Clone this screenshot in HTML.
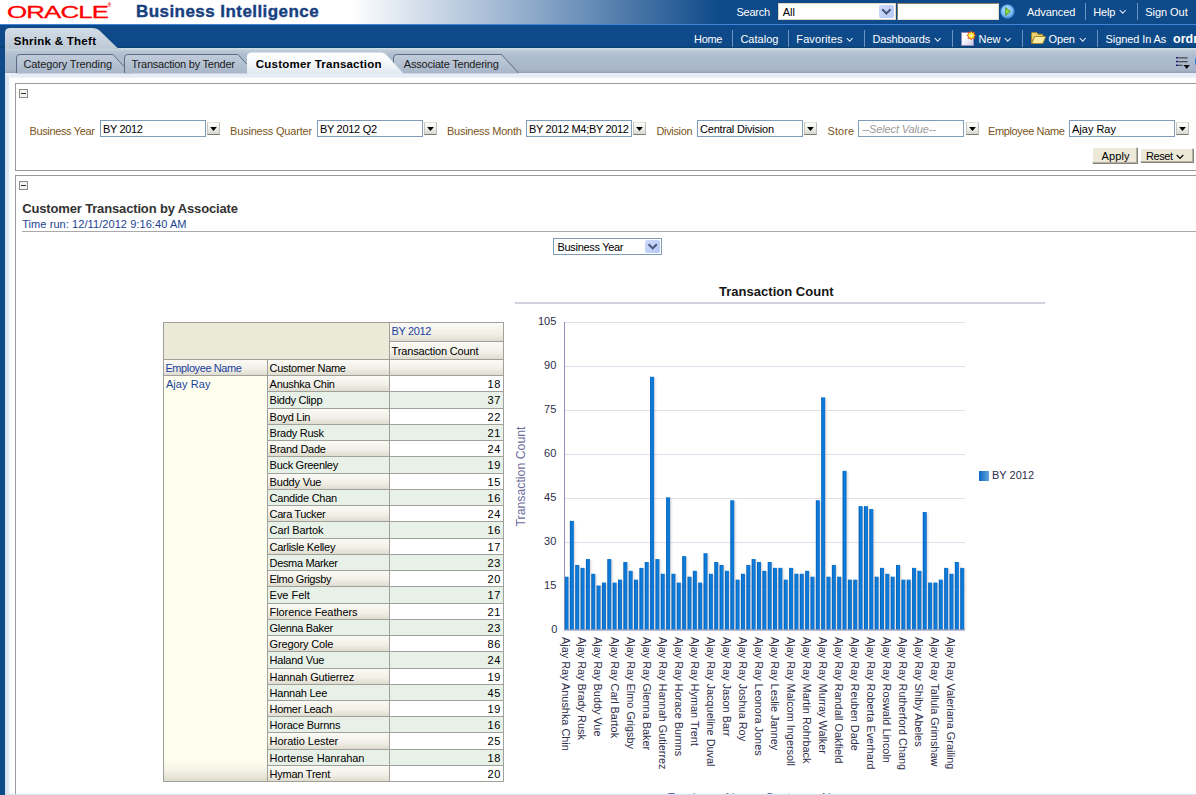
<!DOCTYPE html>
<html lang="en"><head><meta charset="utf-8"><title>Oracle Business Intelligence - Shrink &amp; Theft</title>
<style>
html,body{margin:0;padding:0}
body{width:1196px;height:795px;overflow:hidden;position:relative;background:#fff;font-family:"Liberation Sans",sans-serif;font-size:11px;color:#000}
.a{position:absolute}
.t{position:absolute;white-space:nowrap;line-height:normal}
#hdr{left:0;top:0;width:1196px;height:24px;background:linear-gradient(to right,#fff 0,#fff 350px,#89a6c8 540px,#0e4a89 720px,#0e4a89 100%)}
#hline{left:0;top:24px;width:1196px;height:1px;background:#3f86da}
#nav{left:0;top:25px;width:1196px;height:23px;background:linear-gradient(to bottom,#0e4a89 0,#0e4a89 88%,#0a4070 100%)}
#leftbar{left:0;top:48px;width:5px;height:747px;background:#0e4a89}
#subband{left:5px;top:48px;width:1191px;height:25px;background:linear-gradient(to bottom,#d5dfe8 0,#b9c7d6 12%,#aebdcf 30%,#a7b5c9 88%,#949fb5 100%)}
#content{left:5px;top:73px;width:1191px;height:722px;background:#fff}
.sep{position:absolute;width:1px;background:#6f93bf}
.inp{position:absolute;box-sizing:border-box;border:1px solid #7f9db9;background:#fff;height:17px}
.ddb{position:absolute;box-sizing:border-box;width:13px;height:13px;background:linear-gradient(to bottom,#fdfdfb 0,#f0f0ea 50%,#d8d8d0 100%);border:1px solid;border-color:#e2e2dc #bdbdb5 #7c7c74 #c6c6be}
.ddb:after{content:"";position:absolute;left:1.9px;top:3.8px;width:7.2px;height:4.2px;background:#000;clip-path:polygon(0 0,100% 0,50% 100%)}
.btn{position:absolute;box-sizing:border-box;background:#ece9d8;border:1px solid;border-color:#fff #b5b2a2 #b5b2a2 #fff;box-shadow:1px 1px 0 #86847a}
.sec{position:absolute;box-sizing:border-box;border:1px solid #9a9a9a;border-right:none;background:#fff}
.col{position:absolute;box-sizing:border-box;width:9px;height:9px;border:1px solid #8a8a8a;background:#f4f4ee}
.col:after{content:"";position:absolute;left:1px;top:3px;width:5px;height:1px;background:#333}
.cell{position:absolute;box-sizing:border-box;border-right:1px solid #a3a3a3;border-bottom:1px solid #a3a3a3}
.g{background:linear-gradient(to bottom,#fbfaf6 0,#f1efe6 60%,#dfdccf 100%)}
.gr{background:#e8f1e8}
.w{background:#fff}
.xl{position:absolute;white-space:nowrap;transform-origin:0 0;transform:rotate(90deg);font-size:11px;color:#2e2e4a;line-height:normal}

</style></head>
<body>
<div class="a" id="hdr"></div><div class="a" id="hline"></div><div class="a" id="nav"></div>
<div class="a" id="leftbar"></div><div class="a" id="subband"></div>
<div class="a" id="content"></div>
<div class="a" style="left:5px;top:73px;width:1191px;height:5px;background:linear-gradient(to bottom,#e9eff6 0,#e4ebf4 75%,#f6f9fc 100%)"></div>
<div class="a" style="left:5px;top:75px;width:5px;height:720px;background:linear-gradient(to right,#d6e1ef 0,#dfe8f3 70%,#fff 100%)"></div>
<svg class="a" style="left:0;top:24px" width="1196" height="54" viewBox="0 24 1196 54">
<defs>
<linearGradient id="gt" x1="0" y1="0" x2="0" y2="1"><stop offset="0" stop-color="#d2dde7"/><stop offset="1" stop-color="#bcc9d5"/></linearGradient>
<linearGradient id="gi" x1="0" y1="0" x2="0" y2="1"><stop offset="0" stop-color="#c1cddb"/><stop offset="1" stop-color="#a8b6c9"/></linearGradient>
<linearGradient id="ga" x1="0" y1="0" x2="0" y2="1"><stop offset="0" stop-color="#ffffff"/><stop offset="0.5" stop-color="#f6f8fb"/><stop offset="1" stop-color="#dfe7f0"/></linearGradient>
</defs>
<path d="M5 49 L5 33 Q5 28 10 28 L92 28 Q97 28 100 31 L117 47.5 Q118 48.5 121 48.5 L121 49 Z" fill="url(#gt)"/>
<path d="M16.5 73.5 L16.5 58 Q16.5 54.5 20.0 54.5 L113 54.5 L130 73.5 Z" fill="url(#gi)"/><path d="M16.5 73 L16.5 58 Q16.5 54.5 20.0 54.5 L113 54.5 L130 73" fill="none" stroke="#5d6d80" stroke-width="1"/>
<path d="M124.5 73.5 L124.5 58 Q124.5 54.5 128.0 54.5 L238 54.5 L255 73.5 Z" fill="url(#gi)"/><path d="M124.5 73 L124.5 58 Q124.5 54.5 128.0 54.5 L238 54.5 L255 73" fill="none" stroke="#5d6d80" stroke-width="1"/>
<path d="M393.5 73.5 L393.5 58 Q393.5 54.5 397.0 54.5 L501.5 54.5 L518.5 73.5 Z" fill="url(#gi)"/><path d="M393.5 73 L393.5 58 Q393.5 54.5 397.0 54.5 L501.5 54.5 L518.5 73" fill="none" stroke="#5d6d80" stroke-width="1"/>
<path d="M247 74 L247 57 Q247 52.500 251.500 52.500 L381 52.500 Q384 52.500 386 54.500 L403 73 L403 74 Z" fill="url(#ga)"/>
</svg>
<span class="a" style="left:6.5px;top:2.8px;font-size:16.8px;line-height:normal;color:#f00;transform-origin:0 0;transform:scaleX(1.54);white-space:nowrap;letter-spacing:-0.55px;-webkit-text-stroke:0.3px #f00">ORACLE</span>
<span class="a" style="left:107.8px;top:3.2px;font-size:4.5px;color:#f00;line-height:normal;font-weight:bold">&#174;</span>
<span class="t" id="t0" style="left:136.0px;top:2.3px;font-size:17px;color:#17407f;font-weight:bold;letter-spacing:0.443px;-webkit-text-stroke:0.4px #17407f;">Business Intelligence</span>
<span class="t" id="t1" style="left:736.5px;top:5.9px;font-size:11px;color:#fff;letter-spacing:-0.272px;">Search</span>
<div class="a" style="left:778px;top:3px;width:118px;height:17px;box-sizing:border-box;background:#fff;border:1px solid #ddd6c6"></div>
<div class="a" style="left:879px;top:5px;width:15px;height:13px;border-radius:2px;background:linear-gradient(135deg,#cfdbfb,#b5c7f6);"><svg width="14" height="13" viewBox="0 0 14 13"><path d="M3.200 4.300 L7.400 8.500 L11.600 4.300" fill="none" stroke="#46557a" stroke-width="2"/></svg></div>
<span class="t" id="t2" style="left:782.8px;top:5.9px;font-size:11px;color:#000;letter-spacing:-0.017px;">All</span>
<div class="a" style="left:897px;top:3px;width:102px;height:17px;box-sizing:border-box;background:#fff;border:1px solid;border-color:#8a8168 #e4dfd0 #e4dfd0 #8a8168"></div>
<svg class="a" style="left:1000px;top:4px" width="15" height="15" viewBox="0 0 15 15"><defs><radialGradient id="gb" cx="0.45" cy="0.4" r="0.65"><stop offset="0" stop-color="#c4e4ff"/><stop offset="0.6" stop-color="#7fbef5"/><stop offset="1" stop-color="#3a88d8"/></radialGradient></defs><circle cx="7.500" cy="7.500" r="6.900" fill="url(#gb)" stroke="#2f74c4" stroke-width="0.700"/><path d="M5.700 3.600 L10.300 7.500 L5.700 11.400 Z" fill="#97dc48" stroke="#3f8c1c" stroke-width="0.900" stroke-linejoin="round"/></svg>
<span class="t" id="t3" style="left:1026.9px;top:5.9px;font-size:11px;color:#fff;letter-spacing:-0.048px;">Advanced</span>
<div class="sep" style="left:1085px;top:3px;height:17px"></div>
<span class="t" id="t4" style="left:1093.2px;top:5.9px;font-size:11px;color:#fff;letter-spacing:-0.175px;">Help</span>
<svg class="a" style="left:1119px;top:9px" width="8" height="6"><path d="M0.700 1 L3.700 4.200 L6.700 1" fill="none" stroke="#e8eef7" stroke-width="1.050"/></svg>
<div class="sep" style="left:1137px;top:3px;height:17px"></div>
<span class="t" id="t5" style="left:1145.3px;top:5.9px;font-size:11px;color:#fff;letter-spacing:-0.059px;">Sign Out</span>
<span class="t" id="t6" style="left:694.1px;top:33.3px;font-size:11px;color:#fff;letter-spacing:-0.381px;">Home</span>
<div class="sep" style="left:732px;top:30px;height:17px"></div>
<span class="t" id="t7" style="left:740.4px;top:33.3px;font-size:11px;color:#fff;letter-spacing:0.013px;">Catalog</span>
<div class="sep" style="left:788px;top:30px;height:17px"></div>
<span class="t" id="t8" style="left:796.3px;top:33.3px;font-size:11px;color:#fff;letter-spacing:0.119px;">Favorites</span>
<svg class="a" style="left:846px;top:37px" width="8" height="6"><path d="M0.700 1 L3.700 4.200 L6.700 1" fill="none" stroke="#e8eef7" stroke-width="1.050"/></svg>
<div class="sep" style="left:864px;top:30px;height:17px"></div>
<span class="t" id="t9" style="left:872.4px;top:33.3px;font-size:11px;color:#fff;letter-spacing:-0.159px;">Dashboards</span>
<svg class="a" style="left:934px;top:37px" width="8" height="6"><path d="M0.700 1 L3.700 4.200 L6.700 1" fill="none" stroke="#e8eef7" stroke-width="1.050"/></svg>
<div class="sep" style="left:952px;top:30px;height:17px"></div>
<svg class="a" style="left:960px;top:30px" width="17" height="17" viewBox="0 0 17 17">
<defs><linearGradient id="pg" x1="0" y1="0" x2="1" y2="1"><stop offset="0.35" stop-color="#ffffff"/><stop offset="1" stop-color="#c9c6e6"/></linearGradient></defs>
<path d="M1.500 2.500 L10 2.500 L13.500 6 L13.500 15.500 L1.500 15.500 Z" fill="url(#pg)" stroke="#8e8cb4" stroke-width="1"/>
<path d="M11.30 0.90 L12.41 2.72 L14.48 2.22 L13.98 4.29 L15.80 5.40 L13.98 6.51 L14.48 8.58 L12.41 8.08 L11.30 9.90 L10.19 8.08 L8.12 8.58 L8.62 6.51 L6.80 5.40 L8.62 4.29 L8.12 2.22 L10.19 2.72 Z" fill="#ffe63c" stroke="#d9451c" stroke-width="0.800" stroke-linejoin="round"/>
<circle cx="11.3" cy="5.4" r="1.300" fill="#fff9b0"/>
</svg>
<span class="t" id="t10" style="left:978.4px;top:33.3px;font-size:11px;color:#fff;letter-spacing:0.042px;">New</span>
<svg class="a" style="left:1004px;top:37px" width="8" height="6"><path d="M0.700 1 L3.700 4.200 L6.700 1" fill="none" stroke="#e8eef7" stroke-width="1.050"/></svg>
<div class="sep" style="left:1022px;top:30px;height:17px"></div>
<svg class="a" style="left:1030px;top:31px" width="17" height="14" viewBox="0 0 17 14">
<path d="M1.500 12 L1.500 2.500 Q1.500 1.500 2.500 1.500 L6.300 1.500 Q7 1.500 7.400 2.200 L8 3.300 L12 3.300 Q13 3.300 13 4.300 L13 5.500 L4.500 5.500 Z" fill="#e6cf74" stroke="#a88a28" stroke-width="1" stroke-linejoin="round"/>
<path d="M1.700 12.500 L4.300 6.300 Q4.600 5.500 5.500 5.500 L14.800 5.500 Q15.800 5.500 15.400 6.400 L13.200 11.700 Q12.800 12.500 12 12.500 Z" fill="#f8eba4" stroke="#a88a28" stroke-width="1" stroke-linejoin="round"/>
</svg>
<span class="t" id="t11" style="left:1048.6px;top:33.3px;font-size:11px;color:#fff;letter-spacing:-0.174px;">Open</span>
<svg class="a" style="left:1079px;top:37px" width="8" height="6"><path d="M0.700 1 L3.700 4.200 L6.700 1" fill="none" stroke="#e8eef7" stroke-width="1.050"/></svg>
<div class="sep" style="left:1097px;top:30px;height:17px"></div>
<span class="t" id="t12" style="left:1105.6px;top:33.3px;font-size:11px;color:#fff;letter-spacing:-0.098px;">Signed In As</span>
<span class="t" id="t13" style="left:1173.0px;top:32.0px;font-size:12.5px;color:#fff;font-weight:bold;">ordr</span>
<span class="t" id="t14" style="left:13.8px;top:35.1px;font-size:11.5px;color:#000;font-weight:bold;letter-spacing:0.277px;">Shrink &amp; Theft</span>
<span class="t" id="t15" style="left:23.5px;top:57.6px;font-size:11px;color:#1a1a1a;letter-spacing:-0.125px;">Category Trending</span>
<span class="t" id="t16" style="left:131.5px;top:57.6px;font-size:11px;color:#1a1a1a;letter-spacing:-0.237px;">Transaction by Tender</span>
<span class="t" id="t17" style="left:255.8px;top:58.1px;font-size:11.5px;color:#000;font-weight:bold;letter-spacing:0.225px;">Customer Transaction</span>
<span class="t" id="t18" style="left:403.8px;top:57.6px;font-size:11px;color:#1a1a1a;letter-spacing:-0.210px;">Associate Tendering</span>
<svg class="a" style="left:1174px;top:56px" width="17" height="14" viewBox="0 0 17 14">
<path d="M2 1.700 L4.200 1.700 M2 5.400 L4.200 5.400 M2 9.200 L4.200 9.200" stroke="#1d1d78" stroke-width="1.500"/>
<path d="M4.400 1.900 L13.600 1.900 M4.400 5.600 L13.600 5.600 M4.400 9.400 L8.500 9.400" stroke="#4a4a52" stroke-width="1.300"/>
<path d="M9.600 9 L15.800 9 L12.700 12.900 Z" fill="#0a0a0a"/>
</svg>
<div class="a" style="left:1195px;top:56.500px;width:6px;height:9px;border-radius:5px;background:#2f7fd8"></div>
<div class="sec" style="left:15px;top:83px;width:1190px;height:88px"></div>
<div class="col" style="left:19px;top:89px"></div>
<span class="t" id="t19" style="left:29.4px;top:124.6px;font-size:11px;color:#7a5520;letter-spacing:-0.343px;">Business Year</span>
<div class="inp" style="left:100px;top:120px;width:106px"></div>
<span class="t" id="t20" style="left:103.0px;top:122.6px;font-size:11px;color:#000;letter-spacing:-0.336px;">BY 2012</span>
<div class="ddb" style="left:207px;top:122px"></div>
<span class="t" id="t21" style="left:230.1px;top:124.6px;font-size:11px;color:#7a5520;letter-spacing:-0.199px;">Business Quarter</span>
<div class="inp" style="left:317px;top:120px;width:106px"></div>
<span class="t" id="t22" style="left:320.0px;top:122.6px;font-size:11px;color:#000;letter-spacing:-0.304px;">BY 2012 Q2</span>
<div class="ddb" style="left:424px;top:122px"></div>
<span class="t" id="t23" style="left:447.0px;top:124.6px;font-size:11px;color:#7a5520;letter-spacing:-0.267px;">Business Month</span>
<div class="inp" style="left:526px;top:120px;width:106px"></div>
<span class="t" id="t24" style="left:529.0px;top:122.6px;font-size:11px;color:#000;letter-spacing:-0.318px;">BY 2012 M4;BY 2012</span>
<div class="ddb" style="left:633px;top:122px"></div>
<span class="t" id="t25" style="left:656.5px;top:124.6px;font-size:11px;color:#7a5520;letter-spacing:-0.345px;">Division</span>
<div class="inp" style="left:697px;top:120px;width:106px"></div>
<span class="t" id="t26" style="left:700.0px;top:122.6px;font-size:11px;color:#000;letter-spacing:-0.202px;">Central Division</span>
<div class="ddb" style="left:804px;top:122px"></div>
<span class="t" id="t27" style="left:827.5px;top:124.6px;font-size:11px;color:#7a5520;letter-spacing:0.051px;">Store</span>
<div class="inp" style="left:858px;top:120px;width:106px"></div>
<span class="t" id="t28" style="left:862.0px;top:122.6px;font-size:11px;color:#9a9a9a;font-style:italic;letter-spacing:-0.134px;">--Select Value--</span>
<div class="ddb" style="left:966px;top:122px"></div>
<span class="t" id="t29" style="left:988.1px;top:124.6px;font-size:11px;color:#7a5520;letter-spacing:-0.386px;">Employee Name</span>
<div class="inp" style="left:1069px;top:120px;width:106px"></div>
<span class="t" id="t30" style="left:1072.0px;top:122.6px;font-size:11px;color:#000;letter-spacing:-0.004px;">Ajay Ray</span>
<div class="ddb" style="left:1176px;top:122px"></div>
<div class="btn" style="left:1092px;top:147px;width:45px;height:16px"></div>
<span class="t" id="t31" style="left:1101.5px;top:149.6px;font-size:11px;color:#000;letter-spacing:0.117px;">Apply</span>
<div class="btn" style="left:1140px;top:148px;width:53px;height:14px"></div>
<span class="t" id="t32" style="left:1146.0px;top:149.6px;font-size:11px;color:#000;letter-spacing:-0.438px;">Reset</span>
<svg class="a" style="left:1176px;top:154px" width="9" height="6"><path d="M0.700 1 L4 4.400 L7.300 1" fill="none" stroke="#000" stroke-width="1.100"/></svg>
<div class="sec" style="left:15px;top:175px;width:1190px;height:640px"></div>
<div class="col" style="left:19px;top:181px"></div>
<span class="t" id="t33" style="left:22.2px;top:201.0px;font-size:13px;color:#333;font-weight:bold;letter-spacing:-0.150px;">Customer Transaction by Associate</span>
<span class="t" id="t34" style="left:22.2px;top:217.6px;font-size:11px;color:#1b4392;letter-spacing:0.075px;">Time run: 12/11/2012 9:16:40 AM</span>
<div class="a" style="left:22px;top:231px;width:1180px;height:1px;background:#a9a9a9"></div>
<div class="a" style="left:553px;top:238px;width:109px;height:17px;box-sizing:border-box;background:#fff;border:1px solid #7f9db9"></div>
<div class="a" style="left:645px;top:240px;width:15px;height:13px;border-radius:2px;background:linear-gradient(135deg,#cfdbfb,#b5c7f6);"><svg width="15" height="13" viewBox="0 0 15 13"><path d="M3.600 4.300 L7.700 8.400 L11.800 4.300" fill="none" stroke="#46557a" stroke-width="2"/></svg></div>
<span class="t" id="t35" style="left:557.5px;top:240.6px;font-size:11px;color:#000;letter-spacing:-0.310px;">Business Year</span>
<div class="a" style="left:163px;top:322px;width:341px;height:460px;background:#a1a19b"></div>
<div class="a " style="left:164px;top:323px;width:225px;height:36px;background:#ebe9d7"></div>
<div class="a g" style="left:390px;top:323px;width:113px;height:18px;"></div>
<div class="a g" style="left:390px;top:342px;width:113px;height:17px;"></div>
<div class="a g" style="left:164px;top:360px;width:103px;height:15px;"></div>
<div class="a g" style="left:268px;top:360px;width:121px;height:15px;"></div>
<div class="a g" style="left:390px;top:360px;width:113px;height:15px;"></div>
<div class="a " style="left:164px;top:376px;width:103px;height:405px;background:linear-gradient(to bottom,#fffff0 0,#fffff0 94.5%,#f3f2e4 97.5%,#dedbcd 100%)"></div>
<span class="t" id="t36" style="left:391.6px;top:325.2px;font-size:11px;color:#1b3f9f;letter-spacing:-0.353px;">BY 2012</span>
<span class="t" id="t37" style="left:391.6px;top:344.8px;font-size:11px;color:#000;letter-spacing:-0.162px;">Transaction Count</span>
<span class="t" id="t38" style="left:165.4px;top:361.9px;font-size:11px;color:#1b3f9f;letter-spacing:-0.394px;">Employee Name</span>
<span class="t" id="t39" style="left:269.6px;top:361.9px;font-size:11px;color:#000;letter-spacing:-0.307px;">Customer Name</span>
<span class="t" id="t40" style="left:165.9px;top:378.0px;font-size:11px;color:#1b3f9f;letter-spacing:0.081px;">Ajay Ray</span>
<div class="a g" style="left:268px;top:376px;width:121px;height:15px;"></div>
<div class="a w" style="left:390px;top:376px;width:113px;height:15px;"></div>
<span class="t" id="t41" style="left:269.6px;top:377.6px;font-size:11px;color:#000;letter-spacing:-0.282px;">Anushka Chin</span>
<span class="t" id="t42" style="left:487.5px;top:377.6px;font-size:11px;color:#000;letter-spacing:0.550px;">18</span>
<div class="a gr" style="left:268px;top:392px;width:121px;height:16px;"></div>
<div class="a gr" style="left:390px;top:392px;width:113px;height:16px;"></div>
<span class="t" id="t43" style="left:269.6px;top:393.6px;font-size:11px;color:#000;letter-spacing:-0.274px;">Biddy Clipp</span>
<span class="t" id="t44" style="left:487.5px;top:393.6px;font-size:11px;color:#000;letter-spacing:0.550px;">37</span>
<div class="a g" style="left:268px;top:409px;width:121px;height:15px;"></div>
<div class="a w" style="left:390px;top:409px;width:113px;height:15px;"></div>
<span class="t" id="t45" style="left:269.6px;top:410.6px;font-size:11px;color:#000;letter-spacing:-0.273px;">Boyd Lin</span>
<span class="t" id="t46" style="left:487.5px;top:410.6px;font-size:11px;color:#000;letter-spacing:0.550px;">22</span>
<div class="a gr" style="left:268px;top:425px;width:121px;height:15px;"></div>
<div class="a gr" style="left:390px;top:425px;width:113px;height:15px;"></div>
<span class="t" id="t47" style="left:269.6px;top:426.6px;font-size:11px;color:#000;letter-spacing:-0.273px;">Brady Rusk</span>
<span class="t" id="t48" style="left:487.5px;top:426.6px;font-size:11px;color:#000;letter-spacing:0.550px;">21</span>
<div class="a g" style="left:268px;top:441px;width:121px;height:15px;"></div>
<div class="a w" style="left:390px;top:441px;width:113px;height:15px;"></div>
<span class="t" id="t49" style="left:269.6px;top:442.6px;font-size:11px;color:#000;letter-spacing:-0.269px;">Brand Dade</span>
<span class="t" id="t50" style="left:487.5px;top:442.6px;font-size:11px;color:#000;letter-spacing:0.550px;">24</span>
<div class="a gr" style="left:268px;top:457px;width:121px;height:16px;"></div>
<div class="a gr" style="left:390px;top:457px;width:113px;height:16px;"></div>
<span class="t" id="t51" style="left:269.6px;top:458.6px;font-size:11px;color:#000;letter-spacing:-0.296px;">Buck Greenley</span>
<span class="t" id="t52" style="left:487.5px;top:458.6px;font-size:11px;color:#000;letter-spacing:0.550px;">19</span>
<div class="a g" style="left:268px;top:474px;width:121px;height:15px;"></div>
<div class="a w" style="left:390px;top:474px;width:113px;height:15px;"></div>
<span class="t" id="t53" style="left:269.6px;top:475.6px;font-size:11px;color:#000;letter-spacing:-0.190px;">Buddy Vue</span>
<span class="t" id="t54" style="left:487.5px;top:475.6px;font-size:11px;color:#000;letter-spacing:0.550px;">15</span>
<div class="a gr" style="left:268px;top:490px;width:121px;height:15px;"></div>
<div class="a gr" style="left:390px;top:490px;width:113px;height:15px;"></div>
<span class="t" id="t55" style="left:269.6px;top:491.6px;font-size:11px;color:#000;letter-spacing:-0.249px;">Candide Chan</span>
<span class="t" id="t56" style="left:487.5px;top:491.6px;font-size:11px;color:#000;letter-spacing:0.550px;">16</span>
<div class="a g" style="left:268px;top:506px;width:121px;height:15px;"></div>
<div class="a w" style="left:390px;top:506px;width:113px;height:15px;"></div>
<span class="t" id="t57" style="left:269.6px;top:507.6px;font-size:11px;color:#000;letter-spacing:-0.392px;">Cara Tucker</span>
<span class="t" id="t58" style="left:487.5px;top:507.6px;font-size:11px;color:#000;letter-spacing:0.550px;">24</span>
<div class="a gr" style="left:268px;top:522px;width:121px;height:16px;"></div>
<div class="a gr" style="left:390px;top:522px;width:113px;height:16px;"></div>
<span class="t" id="t59" style="left:269.6px;top:523.6px;font-size:11px;color:#000;letter-spacing:-0.123px;">Carl Bartok</span>
<span class="t" id="t60" style="left:487.5px;top:523.6px;font-size:11px;color:#000;letter-spacing:0.550px;">16</span>
<div class="a g" style="left:268px;top:539px;width:121px;height:15px;"></div>
<div class="a w" style="left:390px;top:539px;width:113px;height:15px;"></div>
<span class="t" id="t61" style="left:269.6px;top:540.6px;font-size:11px;color:#000;letter-spacing:-0.279px;">Carlisle Kelley</span>
<span class="t" id="t62" style="left:487.5px;top:540.6px;font-size:11px;color:#000;letter-spacing:0.550px;">17</span>
<div class="a gr" style="left:268px;top:555px;width:121px;height:15px;"></div>
<div class="a gr" style="left:390px;top:555px;width:113px;height:15px;"></div>
<span class="t" id="t63" style="left:269.6px;top:556.6px;font-size:11px;color:#000;letter-spacing:-0.348px;">Desma Marker</span>
<span class="t" id="t64" style="left:487.5px;top:556.6px;font-size:11px;color:#000;letter-spacing:0.550px;">23</span>
<div class="a g" style="left:268px;top:571px;width:121px;height:15px;"></div>
<div class="a w" style="left:390px;top:571px;width:113px;height:15px;"></div>
<span class="t" id="t65" style="left:269.6px;top:572.6px;font-size:11px;color:#000;letter-spacing:-0.376px;">Elmo Grigsby</span>
<span class="t" id="t66" style="left:487.5px;top:572.6px;font-size:11px;color:#000;letter-spacing:0.550px;">20</span>
<div class="a gr" style="left:268px;top:587px;width:121px;height:16px;"></div>
<div class="a gr" style="left:390px;top:587px;width:113px;height:16px;"></div>
<span class="t" id="t67" style="left:269.6px;top:588.6px;font-size:11px;color:#000;letter-spacing:-0.037px;">Eve Felt</span>
<span class="t" id="t68" style="left:487.5px;top:588.6px;font-size:11px;color:#000;letter-spacing:0.550px;">17</span>
<div class="a g" style="left:268px;top:604px;width:121px;height:15px;"></div>
<div class="a w" style="left:390px;top:604px;width:113px;height:15px;"></div>
<span class="t" id="t69" style="left:269.6px;top:605.6px;font-size:11px;color:#000;letter-spacing:-0.085px;">Florence Feathers</span>
<span class="t" id="t70" style="left:487.5px;top:605.6px;font-size:11px;color:#000;letter-spacing:0.550px;">21</span>
<div class="a gr" style="left:268px;top:620px;width:121px;height:15px;"></div>
<div class="a gr" style="left:390px;top:620px;width:113px;height:15px;"></div>
<span class="t" id="t71" style="left:269.6px;top:621.6px;font-size:11px;color:#000;letter-spacing:-0.342px;">Glenna Baker</span>
<span class="t" id="t72" style="left:487.5px;top:621.6px;font-size:11px;color:#000;letter-spacing:0.550px;">23</span>
<div class="a g" style="left:268px;top:636px;width:121px;height:15px;"></div>
<div class="a w" style="left:390px;top:636px;width:113px;height:15px;"></div>
<span class="t" id="t73" style="left:269.6px;top:637.6px;font-size:11px;color:#000;letter-spacing:-0.147px;">Gregory Cole</span>
<span class="t" id="t74" style="left:487.5px;top:637.6px;font-size:11px;color:#000;letter-spacing:0.550px;">86</span>
<div class="a gr" style="left:268px;top:652px;width:121px;height:16px;"></div>
<div class="a gr" style="left:390px;top:652px;width:113px;height:16px;"></div>
<span class="t" id="t75" style="left:269.6px;top:653.6px;font-size:11px;color:#000;letter-spacing:-0.244px;">Haland Vue</span>
<span class="t" id="t76" style="left:487.5px;top:653.6px;font-size:11px;color:#000;letter-spacing:0.550px;">24</span>
<div class="a g" style="left:268px;top:669px;width:121px;height:15px;"></div>
<div class="a w" style="left:390px;top:669px;width:113px;height:15px;"></div>
<span class="t" id="t77" style="left:269.6px;top:670.6px;font-size:11px;color:#000;letter-spacing:-0.142px;">Hannah Gutierrez</span>
<span class="t" id="t78" style="left:487.5px;top:670.6px;font-size:11px;color:#000;letter-spacing:0.550px;">19</span>
<div class="a gr" style="left:268px;top:685px;width:121px;height:15px;"></div>
<div class="a gr" style="left:390px;top:685px;width:113px;height:15px;"></div>
<span class="t" id="t79" style="left:269.6px;top:686.6px;font-size:11px;color:#000;letter-spacing:-0.250px;">Hannah Lee</span>
<span class="t" id="t80" style="left:487.5px;top:686.6px;font-size:11px;color:#000;letter-spacing:0.550px;">45</span>
<div class="a g" style="left:268px;top:701px;width:121px;height:15px;"></div>
<div class="a w" style="left:390px;top:701px;width:113px;height:15px;"></div>
<span class="t" id="t81" style="left:269.6px;top:702.6px;font-size:11px;color:#000;letter-spacing:-0.315px;">Homer Leach</span>
<span class="t" id="t82" style="left:487.5px;top:702.6px;font-size:11px;color:#000;letter-spacing:0.550px;">19</span>
<div class="a gr" style="left:268px;top:717px;width:121px;height:15px;"></div>
<div class="a gr" style="left:390px;top:717px;width:113px;height:15px;"></div>
<span class="t" id="t83" style="left:269.6px;top:718.6px;font-size:11px;color:#000;letter-spacing:-0.206px;">Horace Burnns</span>
<span class="t" id="t84" style="left:487.5px;top:718.6px;font-size:11px;color:#000;letter-spacing:0.550px;">16</span>
<div class="a g" style="left:268px;top:733px;width:121px;height:16px;"></div>
<div class="a w" style="left:390px;top:733px;width:113px;height:16px;"></div>
<span class="t" id="t85" style="left:269.6px;top:734.6px;font-size:11px;color:#000;letter-spacing:-0.038px;">Horatio Lester</span>
<span class="t" id="t86" style="left:487.5px;top:734.6px;font-size:11px;color:#000;letter-spacing:0.550px;">25</span>
<div class="a gr" style="left:268px;top:750px;width:121px;height:15px;"></div>
<div class="a gr" style="left:390px;top:750px;width:113px;height:15px;"></div>
<span class="t" id="t87" style="left:269.6px;top:751.6px;font-size:11px;color:#000;letter-spacing:-0.070px;">Hortense Hanrahan</span>
<span class="t" id="t88" style="left:487.5px;top:751.6px;font-size:11px;color:#000;letter-spacing:0.550px;">18</span>
<div class="a g" style="left:268px;top:766px;width:121px;height:15px;"></div>
<div class="a w" style="left:390px;top:766px;width:113px;height:15px;"></div>
<span class="t" id="t89" style="left:269.6px;top:767.6px;font-size:11px;color:#000;letter-spacing:-0.237px;">Hyman Trent</span>
<span class="t" id="t90" style="left:487.5px;top:767.6px;font-size:11px;color:#000;letter-spacing:0.550px;">20</span>
<span class="t" id="t91" style="left:719.0px;top:284.1px;font-size:13px;color:#151515;font-weight:bold;letter-spacing:0.023px;">Transaction Count</span>
<div class="a" style="left:515px;top:302.2px;width:530px;height:1.7px;background:#d0d3df"></div>
<svg class="a" style="left:500px;top:310px" width="560" height="485" viewBox="500 310 560 485" font-family="Liberation Sans, sans-serif">
<defs><linearGradient id="bg" x1="0" y1="0" x2="1" y2="0"><stop offset="0" stop-color="#0a5cae"/><stop offset="0.45" stop-color="#0a7fe0"/><stop offset="1" stop-color="#1470c8"/></linearGradient><linearGradient id="sh" x1="0" y1="0" x2="1" y2="0"><stop offset="0" stop-color="#c4b8b0" stop-opacity="0.5"/><stop offset="1" stop-color="#c8c8d0" stop-opacity="0"/></linearGradient><linearGradient id="lg" x1="0" y1="0" x2="1" y2="0"><stop offset="0" stop-color="#0a66c2"/><stop offset="1" stop-color="#63a6de"/></linearGradient></defs>
<rect x="565" y="586.00" width="400" height="1" fill="#dfdfec"/>
<text x="556.3" y="589.20" font-size="11" fill="#2e2e4a" text-anchor="end">15</text>
<rect x="565" y="542.00" width="400" height="1" fill="#dfdfec"/>
<text x="556.3" y="545.20" font-size="11" fill="#2e2e4a" text-anchor="end">30</text>
<rect x="565" y="498.00" width="400" height="1" fill="#dfdfec"/>
<text x="556.3" y="501.20" font-size="11" fill="#2e2e4a" text-anchor="end">45</text>
<rect x="565" y="454.00" width="400" height="1" fill="#dfdfec"/>
<text x="556.3" y="457.20" font-size="11" fill="#2e2e4a" text-anchor="end">60</text>
<rect x="565" y="410.00" width="400" height="1" fill="#dfdfec"/>
<text x="556.3" y="413.20" font-size="11" fill="#2e2e4a" text-anchor="end">75</text>
<rect x="565" y="366.00" width="400" height="1" fill="#dfdfec"/>
<text x="556.3" y="369.20" font-size="11" fill="#2e2e4a" text-anchor="end">90</text>
<rect x="565" y="322.00" width="400" height="1" fill="#dfdfec"/>
<text x="556.3" y="324.70" font-size="11" fill="#2e2e4a" text-anchor="end">105</text>
<text x="557.4" y="633.00" font-size="11" fill="#2e2e4a" text-anchor="end">0</text>
<rect x="568.55" y="577.68" width="3" height="51.92" fill="url(#sh)"/>
<rect x="573.90" y="521.82" width="3" height="107.78" fill="url(#sh)"/>
<rect x="579.24" y="565.92" width="3" height="63.68" fill="url(#sh)"/>
<rect x="584.59" y="568.86" width="3" height="60.74" fill="url(#sh)"/>
<rect x="589.94" y="560.04" width="3" height="69.56" fill="url(#sh)"/>
<rect x="595.28" y="574.74" width="3" height="54.86" fill="url(#sh)"/>
<rect x="600.63" y="586.50" width="3" height="43.10" fill="url(#sh)"/>
<rect x="605.98" y="583.56" width="3" height="46.04" fill="url(#sh)"/>
<rect x="611.33" y="560.04" width="3" height="69.56" fill="url(#sh)"/>
<rect x="616.67" y="583.56" width="3" height="46.04" fill="url(#sh)"/>
<rect x="622.02" y="580.62" width="3" height="48.98" fill="url(#sh)"/>
<rect x="627.37" y="562.98" width="3" height="66.62" fill="url(#sh)"/>
<rect x="632.71" y="571.80" width="3" height="57.80" fill="url(#sh)"/>
<rect x="638.06" y="580.62" width="3" height="48.98" fill="url(#sh)"/>
<rect x="643.41" y="568.86" width="3" height="60.74" fill="url(#sh)"/>
<rect x="648.75" y="562.98" width="3" height="66.62" fill="url(#sh)"/>
<rect x="654.10" y="377.76" width="3" height="251.84" fill="url(#sh)"/>
<rect x="659.45" y="560.04" width="3" height="69.56" fill="url(#sh)"/>
<rect x="664.80" y="574.74" width="3" height="54.86" fill="url(#sh)"/>
<rect x="670.14" y="498.30" width="3" height="131.30" fill="url(#sh)"/>
<rect x="675.49" y="574.74" width="3" height="54.86" fill="url(#sh)"/>
<rect x="680.84" y="583.56" width="3" height="46.04" fill="url(#sh)"/>
<rect x="686.18" y="557.10" width="3" height="72.50" fill="url(#sh)"/>
<rect x="691.53" y="577.68" width="3" height="51.92" fill="url(#sh)"/>
<rect x="696.88" y="571.80" width="3" height="57.80" fill="url(#sh)"/>
<rect x="702.22" y="583.56" width="3" height="46.04" fill="url(#sh)"/>
<rect x="707.57" y="554.16" width="3" height="75.44" fill="url(#sh)"/>
<rect x="712.92" y="574.74" width="3" height="54.86" fill="url(#sh)"/>
<rect x="718.27" y="562.98" width="3" height="66.62" fill="url(#sh)"/>
<rect x="723.61" y="565.92" width="3" height="63.68" fill="url(#sh)"/>
<rect x="728.96" y="571.80" width="3" height="57.80" fill="url(#sh)"/>
<rect x="734.31" y="501.24" width="3" height="128.36" fill="url(#sh)"/>
<rect x="739.65" y="580.62" width="3" height="48.98" fill="url(#sh)"/>
<rect x="745.00" y="574.74" width="3" height="54.86" fill="url(#sh)"/>
<rect x="750.35" y="565.92" width="3" height="63.68" fill="url(#sh)"/>
<rect x="755.69" y="560.04" width="3" height="69.56" fill="url(#sh)"/>
<rect x="761.04" y="562.98" width="3" height="66.62" fill="url(#sh)"/>
<rect x="766.39" y="571.80" width="3" height="57.80" fill="url(#sh)"/>
<rect x="771.74" y="562.98" width="3" height="66.62" fill="url(#sh)"/>
<rect x="777.08" y="568.86" width="3" height="60.74" fill="url(#sh)"/>
<rect x="782.43" y="568.86" width="3" height="60.74" fill="url(#sh)"/>
<rect x="787.78" y="580.62" width="3" height="48.98" fill="url(#sh)"/>
<rect x="793.12" y="568.86" width="3" height="60.74" fill="url(#sh)"/>
<rect x="798.47" y="574.74" width="3" height="54.86" fill="url(#sh)"/>
<rect x="803.82" y="574.74" width="3" height="54.86" fill="url(#sh)"/>
<rect x="809.16" y="571.80" width="3" height="57.80" fill="url(#sh)"/>
<rect x="814.51" y="577.68" width="3" height="51.92" fill="url(#sh)"/>
<rect x="819.86" y="501.24" width="3" height="128.36" fill="url(#sh)"/>
<rect x="825.21" y="398.34" width="3" height="231.26" fill="url(#sh)"/>
<rect x="830.55" y="577.68" width="3" height="51.92" fill="url(#sh)"/>
<rect x="835.90" y="565.92" width="3" height="63.68" fill="url(#sh)"/>
<rect x="841.25" y="577.68" width="3" height="51.92" fill="url(#sh)"/>
<rect x="846.59" y="471.84" width="3" height="157.76" fill="url(#sh)"/>
<rect x="851.94" y="580.62" width="3" height="48.98" fill="url(#sh)"/>
<rect x="857.29" y="580.62" width="3" height="48.98" fill="url(#sh)"/>
<rect x="862.63" y="507.12" width="3" height="122.48" fill="url(#sh)"/>
<rect x="867.98" y="507.12" width="3" height="122.48" fill="url(#sh)"/>
<rect x="873.33" y="510.06" width="3" height="119.54" fill="url(#sh)"/>
<rect x="878.68" y="577.68" width="3" height="51.92" fill="url(#sh)"/>
<rect x="884.02" y="568.86" width="3" height="60.74" fill="url(#sh)"/>
<rect x="889.37" y="574.74" width="3" height="54.86" fill="url(#sh)"/>
<rect x="894.72" y="577.68" width="3" height="51.92" fill="url(#sh)"/>
<rect x="900.06" y="565.92" width="3" height="63.68" fill="url(#sh)"/>
<rect x="905.41" y="580.62" width="3" height="48.98" fill="url(#sh)"/>
<rect x="910.76" y="580.62" width="3" height="48.98" fill="url(#sh)"/>
<rect x="916.11" y="568.86" width="3" height="60.74" fill="url(#sh)"/>
<rect x="921.45" y="571.80" width="3" height="57.80" fill="url(#sh)"/>
<rect x="926.80" y="513.00" width="3" height="116.60" fill="url(#sh)"/>
<rect x="932.15" y="583.56" width="3" height="46.04" fill="url(#sh)"/>
<rect x="937.49" y="583.56" width="3" height="46.04" fill="url(#sh)"/>
<rect x="942.84" y="580.62" width="3" height="48.98" fill="url(#sh)"/>
<rect x="948.19" y="568.86" width="3" height="60.74" fill="url(#sh)"/>
<rect x="953.53" y="574.74" width="3" height="54.86" fill="url(#sh)"/>
<rect x="958.88" y="562.98" width="3" height="66.62" fill="url(#sh)"/>
<rect x="964.23" y="568.86" width="3" height="60.74" fill="url(#sh)"/>
<rect x="564.50" y="576.68" width="4.05" height="52.92" fill="url(#bg)"/>
<rect x="569.85" y="520.82" width="4.05" height="108.78" fill="url(#bg)"/>
<rect x="575.19" y="564.92" width="4.05" height="64.68" fill="url(#bg)"/>
<rect x="580.54" y="567.86" width="4.05" height="61.74" fill="url(#bg)"/>
<rect x="585.89" y="559.04" width="4.05" height="70.56" fill="url(#bg)"/>
<rect x="591.24" y="573.74" width="4.05" height="55.86" fill="url(#bg)"/>
<rect x="596.58" y="585.50" width="4.05" height="44.10" fill="url(#bg)"/>
<rect x="601.93" y="582.56" width="4.05" height="47.04" fill="url(#bg)"/>
<rect x="607.28" y="559.04" width="4.05" height="70.56" fill="url(#bg)"/>
<rect x="612.62" y="582.56" width="4.05" height="47.04" fill="url(#bg)"/>
<rect x="617.97" y="579.62" width="4.05" height="49.98" fill="url(#bg)"/>
<rect x="623.32" y="561.98" width="4.05" height="67.62" fill="url(#bg)"/>
<rect x="628.66" y="570.80" width="4.05" height="58.80" fill="url(#bg)"/>
<rect x="634.01" y="579.62" width="4.05" height="49.98" fill="url(#bg)"/>
<rect x="639.36" y="567.86" width="4.05" height="61.74" fill="url(#bg)"/>
<rect x="644.71" y="561.98" width="4.05" height="67.62" fill="url(#bg)"/>
<rect x="650.05" y="376.76" width="4.05" height="252.84" fill="url(#bg)"/>
<rect x="655.40" y="559.04" width="4.05" height="70.56" fill="url(#bg)"/>
<rect x="660.75" y="573.74" width="4.05" height="55.86" fill="url(#bg)"/>
<rect x="666.09" y="497.30" width="4.05" height="132.30" fill="url(#bg)"/>
<rect x="671.44" y="573.74" width="4.05" height="55.86" fill="url(#bg)"/>
<rect x="676.79" y="582.56" width="4.05" height="47.04" fill="url(#bg)"/>
<rect x="682.13" y="556.10" width="4.05" height="73.50" fill="url(#bg)"/>
<rect x="687.48" y="576.68" width="4.05" height="52.92" fill="url(#bg)"/>
<rect x="692.83" y="570.80" width="4.05" height="58.80" fill="url(#bg)"/>
<rect x="698.17" y="582.56" width="4.05" height="47.04" fill="url(#bg)"/>
<rect x="703.52" y="553.16" width="4.05" height="76.44" fill="url(#bg)"/>
<rect x="708.87" y="573.74" width="4.05" height="55.86" fill="url(#bg)"/>
<rect x="714.22" y="561.98" width="4.05" height="67.62" fill="url(#bg)"/>
<rect x="719.56" y="564.92" width="4.05" height="64.68" fill="url(#bg)"/>
<rect x="724.91" y="570.80" width="4.05" height="58.80" fill="url(#bg)"/>
<rect x="730.26" y="500.24" width="4.05" height="129.36" fill="url(#bg)"/>
<rect x="735.60" y="579.62" width="4.05" height="49.98" fill="url(#bg)"/>
<rect x="740.95" y="573.74" width="4.05" height="55.86" fill="url(#bg)"/>
<rect x="746.30" y="564.92" width="4.05" height="64.68" fill="url(#bg)"/>
<rect x="751.64" y="559.04" width="4.05" height="70.56" fill="url(#bg)"/>
<rect x="756.99" y="561.98" width="4.05" height="67.62" fill="url(#bg)"/>
<rect x="762.34" y="570.80" width="4.05" height="58.80" fill="url(#bg)"/>
<rect x="767.69" y="561.98" width="4.05" height="67.62" fill="url(#bg)"/>
<rect x="773.03" y="567.86" width="4.05" height="61.74" fill="url(#bg)"/>
<rect x="778.38" y="567.86" width="4.05" height="61.74" fill="url(#bg)"/>
<rect x="783.73" y="579.62" width="4.05" height="49.98" fill="url(#bg)"/>
<rect x="789.07" y="567.86" width="4.05" height="61.74" fill="url(#bg)"/>
<rect x="794.42" y="573.74" width="4.05" height="55.86" fill="url(#bg)"/>
<rect x="799.77" y="573.74" width="4.05" height="55.86" fill="url(#bg)"/>
<rect x="805.12" y="570.80" width="4.05" height="58.80" fill="url(#bg)"/>
<rect x="810.46" y="576.68" width="4.05" height="52.92" fill="url(#bg)"/>
<rect x="815.81" y="500.24" width="4.05" height="129.36" fill="url(#bg)"/>
<rect x="821.16" y="397.34" width="4.05" height="232.26" fill="url(#bg)"/>
<rect x="826.50" y="576.68" width="4.05" height="52.92" fill="url(#bg)"/>
<rect x="831.85" y="564.92" width="4.05" height="64.68" fill="url(#bg)"/>
<rect x="837.20" y="576.68" width="4.05" height="52.92" fill="url(#bg)"/>
<rect x="842.54" y="470.84" width="4.05" height="158.76" fill="url(#bg)"/>
<rect x="847.89" y="579.62" width="4.05" height="49.98" fill="url(#bg)"/>
<rect x="853.24" y="579.62" width="4.05" height="49.98" fill="url(#bg)"/>
<rect x="858.59" y="506.12" width="4.05" height="123.48" fill="url(#bg)"/>
<rect x="863.93" y="506.12" width="4.05" height="123.48" fill="url(#bg)"/>
<rect x="869.28" y="509.06" width="4.05" height="120.54" fill="url(#bg)"/>
<rect x="874.63" y="576.68" width="4.05" height="52.92" fill="url(#bg)"/>
<rect x="879.97" y="567.86" width="4.05" height="61.74" fill="url(#bg)"/>
<rect x="885.32" y="573.74" width="4.05" height="55.86" fill="url(#bg)"/>
<rect x="890.67" y="576.68" width="4.05" height="52.92" fill="url(#bg)"/>
<rect x="896.01" y="564.92" width="4.05" height="64.68" fill="url(#bg)"/>
<rect x="901.36" y="579.62" width="4.05" height="49.98" fill="url(#bg)"/>
<rect x="906.71" y="579.62" width="4.05" height="49.98" fill="url(#bg)"/>
<rect x="912.06" y="567.86" width="4.05" height="61.74" fill="url(#bg)"/>
<rect x="917.40" y="570.80" width="4.05" height="58.80" fill="url(#bg)"/>
<rect x="922.75" y="512.00" width="4.05" height="117.60" fill="url(#bg)"/>
<rect x="928.10" y="582.56" width="4.05" height="47.04" fill="url(#bg)"/>
<rect x="933.44" y="582.56" width="4.05" height="47.04" fill="url(#bg)"/>
<rect x="938.79" y="579.62" width="4.05" height="49.98" fill="url(#bg)"/>
<rect x="944.14" y="567.86" width="4.05" height="61.74" fill="url(#bg)"/>
<rect x="949.48" y="573.74" width="4.05" height="55.86" fill="url(#bg)"/>
<rect x="954.83" y="561.98" width="4.05" height="67.62" fill="url(#bg)"/>
<rect x="960.18" y="567.86" width="4.05" height="61.74" fill="url(#bg)"/>
<rect x="564" y="322" width="1" height="308" fill="#8f8fbf"/>
<rect x="564" y="629.500" width="401" height="1" fill="#7a7aac"/>
<text transform="translate(562.40 637) rotate(90)" font-size="10.9" fill="#2e2e4a">Ajay Ray Anushka Chin</text>
<text transform="translate(578.44 637) rotate(90)" font-size="10.9" fill="#2e2e4a">Ajay Ray Brady Rusk</text>
<text transform="translate(594.48 637) rotate(90)" font-size="10.9" fill="#2e2e4a">Ajay Ray Buddy Vue</text>
<text transform="translate(610.52 637) rotate(90)" font-size="10.9" fill="#2e2e4a">Ajay Ray Carl Bartok</text>
<text transform="translate(626.56 637) rotate(90)" font-size="10.9" fill="#2e2e4a">Ajay Ray Elmo Grigsby</text>
<text transform="translate(642.60 637) rotate(90)" font-size="10.9" fill="#2e2e4a">Ajay Ray Glenna Baker</text>
<text transform="translate(658.64 637) rotate(90)" font-size="10.9" fill="#2e2e4a">Ajay Ray Hannah Gutierrez</text>
<text transform="translate(674.68 637) rotate(90)" font-size="10.9" fill="#2e2e4a">Ajay Ray Horace Burnns</text>
<text transform="translate(690.72 637) rotate(90)" font-size="10.9" fill="#2e2e4a">Ajay Ray Hyman Trent</text>
<text transform="translate(706.76 637) rotate(90)" font-size="10.9" fill="#2e2e4a">Ajay Ray Jacqueline Duval</text>
<text transform="translate(722.80 637) rotate(90)" font-size="10.9" fill="#2e2e4a">Ajay Ray Jason Barr</text>
<text transform="translate(738.84 637) rotate(90)" font-size="10.9" fill="#2e2e4a">Ajay Ray Joshua Roy</text>
<text transform="translate(754.88 637) rotate(90)" font-size="10.9" fill="#2e2e4a">Ajay Ray Leonora Jones</text>
<text transform="translate(770.92 637) rotate(90)" font-size="10.9" fill="#2e2e4a">Ajay Ray Leslie Janney</text>
<text transform="translate(786.96 637) rotate(90)" font-size="10.9" fill="#2e2e4a">Ajay Ray Malcom Ingersoll</text>
<text transform="translate(803.00 637) rotate(90)" font-size="10.9" fill="#2e2e4a">Ajay Ray Martin Rohrback</text>
<text transform="translate(819.04 637) rotate(90)" font-size="10.9" fill="#2e2e4a">Ajay Ray Murray Walker</text>
<text transform="translate(835.08 637) rotate(90)" font-size="10.9" fill="#2e2e4a">Ajay Ray Randall Oakfield</text>
<text transform="translate(851.12 637) rotate(90)" font-size="10.9" fill="#2e2e4a">Ajay Ray Reuben Dade</text>
<text transform="translate(867.16 637) rotate(90)" font-size="10.9" fill="#2e2e4a">Ajay Ray Roberta Everhard</text>
<text transform="translate(883.20 637) rotate(90)" font-size="10.9" fill="#2e2e4a">Ajay Ray Roswald Lincoln</text>
<text transform="translate(899.24 637) rotate(90)" font-size="10.9" fill="#2e2e4a">Ajay Ray Rutherford Chang</text>
<text transform="translate(915.28 637) rotate(90)" font-size="10.9" fill="#2e2e4a">Ajay Ray Shiby Abeles</text>
<text transform="translate(931.32 637) rotate(90)" font-size="10.9" fill="#2e2e4a">Ajay Ray Tallula Grimshaw</text>
<text transform="translate(947.36 637) rotate(90)" font-size="10.9" fill="#2e2e4a">Ajay Ray Valeriana Grailing</text>
<text transform="translate(524.8 476.500) rotate(-90)" font-size="12.3" fill="#6b6b9b" text-anchor="middle">Transaction Count</text>
<rect x="979" y="471" width="10" height="10" fill="url(#lg)"/>
<text x="992" y="478.800" font-size="11" fill="#2e2e4a">BY 2012</text>
<text x="761" y="801.5" font-size="12.3" fill="#6b6b9b" text-anchor="middle">Employee Name, Customer Name</text>
</svg>
<div class="a" style="left:5px;top:793.7px;width:1191px;height:2px;background:#d3e1f2"></div>
</body></html>
